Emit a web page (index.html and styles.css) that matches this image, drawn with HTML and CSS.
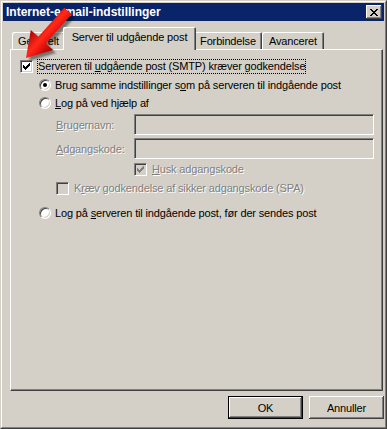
FILE: index.html
```html
<!DOCTYPE html>
<html lang="da">

<head>
  <meta charset="UTF-8">
  <title>Internet-e-mail-indstillinger</title>

  <link rel="stylesheet" href="styles.css">
</head>

<body>
  <div class="window">
    <div class="frame">
      <div class="titlebar">
        <span class="title">Internet-e-mail-indstillinger</span>
        <span class="close">
          <svg width="8" height="7" viewBox="0 0 8 7" shape-rendering="crispEdges">
            <path d="M0 0h2v1h-2z M6 0h2v1h-2z M1 1h2v1h-2z M5 1h2v1h-2z M2 2h4v1h-4z M3 3h2v1h-2z M2 4h4v1h-4z M1 5h2v1h-2z M5 5h2v1h-2z M0 6h2v1h-2z M6 6h2v1h-2z" fill="#000"/>
          </svg>
        </span>
      </div>

      <div class="tabs">
        <div class="tab tab-general">Generelt</div>
        <div class="tab tab-active">Server til udgående post</div>
        <div class="tab tab-connection">Forbindelse</div>
        <div class="tab tab-advanced">Avanceret</div>
      </div>

      <div class="panel">
        <div class="row check-row">
          <span class="checkbox">
            <svg class="tick" width="7" height="7" viewBox="0 0 7 7" shape-rendering="crispEdges">
              <path d="M0 2h1v3h-1z M1 3h1v3h-1z M2 4h1v3h-1z M3 3h1v3h-1z M4 2h1v3h-1z M5 1h1v3h-1z M6 0h1v3h-1z"/>
            </svg>
          </span>
          <span class="focus">Serveren til <u>u</u>dgående post (SMTP) kræver godkendelse</span>
        </div>

        <div class="options">
          <div class="row radio-row first">
            <span class="radio on"></span>
            <span>Brug samme indstillinger s<u>o</u>m på serveren til indgående post</span>
          </div>
          <div class="row radio-row">
            <span class="radio"></span>
            <span><u>L</u>og på ved hjælp af</span>
          </div>

          <div class="fields">
            <div class="field">
              <span class="field-label disabled"><u>B</u>rugernavn:</span>
              <span class="input"></span>
            </div>
            <div class="field">
              <span class="field-label disabled"><u>A</u>dgangskode:</span>
              <span class="input"></span>
            </div>
            <div class="row remember">
              <span class="checkbox off">
                <svg class="tick" width="7" height="7" viewBox="0 0 7 7" shape-rendering="crispEdges">
                  <path d="M0 2h1v3h-1z M1 3h1v3h-1z M2 4h1v3h-1z M3 3h1v3h-1z M4 2h1v3h-1z M5 1h1v3h-1z M6 0h1v3h-1z"/>
                </svg>
              </span>
              <span class="disabled"><u>H</u>usk adgangskode</span>
            </div>
            <div class="row spa">
              <span class="checkbox off"></span>
              <span class="disabled">K<u>r</u>æv godkendelse af sikker adgangskode (SPA)</span>
            </div>
          </div>

          <div class="row radio-row last">
            <span class="radio"></span>
            <span>Log på <u>s</u>erveren til indgående post, før der sendes post</span>
          </div>
        </div>
      </div>

      <div class="buttons">
        <button class="btn btn-default">OK</button>
        <button class="btn">Annuller</button>
      </div>
    </div>

    <!-- red pointer drawn over the dialog -->
    <svg class="arrow" width="80" height="70" viewBox="0 0 80 70">
      <defs>
        <linearGradient id="red" gradientUnits="userSpaceOnUse" x1="29.8" y1="29.1" x2="52.2" y2="49.1">
          <stop offset="0" stop-color="#a80000"/>
          <stop offset="0.45" stop-color="#ff2a1a"/>
          <stop offset="0.6" stop-color="#f01810"/>
          <stop offset="1" stop-color="#a00000"/>
        </linearGradient>
      </defs>
      <polygon points="63.3,6.7 37.3,35.8 29.8,29.1 25,57 52.2,49.1 44.7,42.4 70.7,13.3" fill="url(#red)"/>
    </svg>
  </div>
</body>

</html>
```

FILE: styles.css
```css
html,
body {
  margin: 0;
  background: #d4d0c8;
}

body {
  font-family: "Liberation Sans", Arial, sans-serif;
  font-size: 11px;
  letter-spacing: -0.15px;
  color: #000;
}

.window {
  position: relative;
  width: 387px;
  height: 429px;
  box-sizing: border-box;
  border: 1px solid;
  border-color: #d4d0c8 #404040 #404040 #d4d0c8;
}

.frame {
  height: 100%;
  box-sizing: border-box;
  border: 1px solid;
  border-color: #fff #808080 #808080 #fff;
  padding: 1px;
}

.titlebar {
  display: flex;
  align-items: center;
  justify-content: space-between;
  height: 18px;
  padding: 0 2px 0 3px;
  background: #0a246a;
}

.title {
  color: #fff;
  font-weight: bold;
  font-size: 12px;
  letter-spacing: 0;
}

.close {
  display: flex;
  align-items: center;
  justify-content: center;
  width: 16px;
  height: 14px;
  box-sizing: border-box;
  background: #d4d0c8;
  box-shadow: inset -1px -1px #404040, inset 1px 1px #fff, inset -2px -2px #808080;
}

/* tabs */
.tabs {
  display: flex;
  align-items: flex-end;
  height: 22px;
  margin-top: 6px;
  padding-left: 9px;
}

.tab {
  height: 17px;
  box-sizing: border-box;
  display: flex;
  align-items: center;
  justify-content: center;
  padding-top: 1px;
  border-radius: 2px 2px 0 0;
  background: #d4d0c8;
  box-shadow: inset 1px 1px #fff, inset -1px 0 #404040, inset -2px 0 #808080;
  white-space: nowrap;
}

.tab-general {
  width: 53px;
}

.tab-active {
  position: relative;
  z-index: 1;
  width: 133px;
  height: 23px;
  margin: 0 -2px -1px;
  padding-top: 0;
  padding-bottom: 4px;
}

.tab-connection {
  width: 68px;
}

.tab-advanced {
  width: 62px;
}

/* tab page */
.panel {
  width: 373px;
  height: 342px;
  box-sizing: border-box;
  margin-left: 7px;
  border: 1px solid;
  border-color: #fff #404040 #404040 #fff;
  box-shadow: inset -1px -1px #808080;
}

.row {
  display: flex;
  align-items: center;
  white-space: nowrap;
}

.check-row {
  height: 17px;
  margin-top: 8px;
  padding-left: 9px;
}

.checkbox {
  position: relative;
  flex: none;
  width: 13px;
  height: 13px;
  box-sizing: border-box;
  background: #fff;
  border: 1px solid;
  border-color: #808080 #fff #fff #808080;
  box-shadow: inset 1px 1px #404040, inset -1px -1px #d4d0c8;
}

.checkbox .tick {
  position: absolute;
  left: 2px;
  top: 2px;
  fill: #000;
}

.checkbox.off {
  background: #d4d0c8;
}

.checkbox.off .tick {
  fill: #808080;
}

.focus {
  margin-left: 4px;
  padding: 1px 1px 2px;
  outline: 1px dotted #000;
  outline-offset: -1px;
}

.options {
  padding-left: 28px;
}

.radio-row {
  height: 16px;
  margin-top: 2px;
}

.radio-row.first {
  margin-top: 2px;
}

.radio-row.last {
  margin-top: 9px;
}

.radio {
  position: relative;
  flex: none;
  width: 12px;
  height: 12px;
  box-sizing: border-box;
  margin-right: 4px;
  border-radius: 50%;
  background: #fff;
  border: 1px solid;
  border-color: #808080 #fff #fff #808080;
  box-shadow: inset 1px 1px #404040, inset -1px -1px #d4d0c8;
}

.radio.on::after {
  content: "";
  position: absolute;
  left: 3px;
  top: 3px;
  width: 4px;
  height: 4px;
  border-radius: 50%;
  background: #000;
}

.fields {
  padding-left: 16px;
}

.field {
  display: flex;
  align-items: center;
  height: 21px;
  margin-top: 3px;
}

.field-label {
  width: 79px;
  padding-left: 1px;
  box-sizing: border-box;
}

.input {
  width: 240px;
  height: 21px;
  box-sizing: border-box;
  border: 1px solid;
  border-color: #808080 #fff #fff #808080;
  box-shadow: inset 1px 1px #404040, inset -1px -1px #d4d0c8;
  background: #d4d0c8;
}

.disabled {
  color: #808080;
  text-shadow: 1px 1px 0 #fff;
}

.remember {
  height: 16px;
  margin-top: 2px;
  padding-left: 79px;
}

.spa {
  height: 16px;
  margin-top: 3px;
  padding-left: 1px;
}

.remember .checkbox,
.spa .checkbox {
  margin-right: 5px;
}

/* dialog buttons */
.buttons {
  display: flex;
  justify-content: flex-end;
  gap: 6px;
  margin-top: 5px;
}

.btn {
  width: 75px;
  height: 23px;
  padding: 0;
  border: none;
  background: #d4d0c8;
  font-family: "Liberation Sans", Arial, sans-serif;
  font-size: 11px;
  letter-spacing: -0.15px;
  color: #000;
  box-shadow: inset -1px -1px #404040, inset 1px 1px #fff, inset -2px -2px #808080;
}

.btn-default {
  box-shadow: inset 0 0 0 1px #000, inset -2px -2px #404040, inset 2px 2px #fff, inset -3px -3px #808080;
}

.arrow {
  position: absolute;
  left: 0;
  top: 0;
  filter: drop-shadow(3px 3px 1px rgba(0, 0, 0, 0.45));
}
```
